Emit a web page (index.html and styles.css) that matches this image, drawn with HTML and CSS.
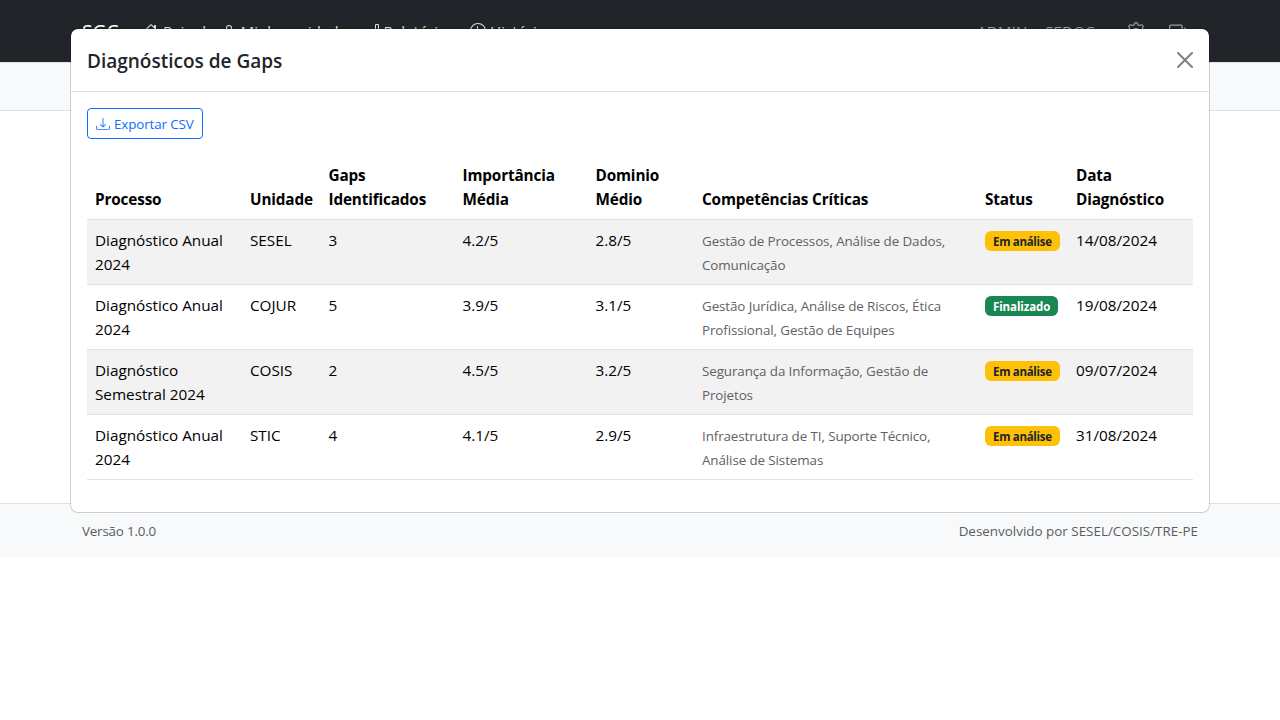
FILE: index.html
```html
<!DOCTYPE html>
<html lang="pt-BR">
<head>
<meta charset="utf-8">
<title>SGC</title>
<link rel="stylesheet" href="styles.css">
</head>
<body>
<nav class="navbar">
  <div class="container">
    <span class="brand">SGC</span>
    <div class="links">
      <span class="link painel"><svg class="bi" viewBox="0 0 16 16"><path d="M8.707 1.5a1 1 0 0 0-1.414 0L.646 8.146a.5.5 0 0 0 .708.708L2 8.207V13.5A1.5 1.5 0 0 0 3.500 15h9a1.500 1.500 0 0 0 1.500-1.500V8.207l.646.647a.5.5 0 0 0 .708-.708L13 5.793V2.500a.5.5 0 0 0-.5-.5h-1a.5.5 0 0 0-.5.5v1.293zM13 7.207V13.500a.5.5 0 0 1-.5.5h-9a.5.5 0 0 1-.5-.5V7.207l5-5z"/></svg> Painel</span>
      <span class="link unidade"><svg class="bi" viewBox="0 0 16 16"><path d="M8 8a3 3 0 1 0 0-6 3 3 0 0 0 0 6m2-3a2 2 0 1 1-4 0 2 2 0 0 1 4 0m4 8c0 1-1 1-1 1H3s-1 0-1-1 1-4 6-4 6 3 6 4m-1-.004c-.001-.246-.154-.986-.832-1.664C11.516 10.680 10.289 10 8 10s-3.516.68-4.168 1.332c-.678.678-.83 1.418-.832 1.664z"/></svg> Minha unidade</span>
      <span class="link relatorios"><svg class="bi" viewBox="0 0 16 16"><path d="M4 11H2v3h2zm5-4H7v7h2zm5-5v12h-2V2zm-2-1a1 1 0 0 0-1 1v12a1 1 0 0 0 1 1h2a1 1 0 0 0 1-1V2a1 1 0 0 0-1-1zM6 7a1 1 0 0 1 1-1h2a1 1 0 0 1 1 1v7a1 1 0 0 1-1 1H7a1 1 0 0 1-1-1zm-5 4a1 1 0 0 1 1-1h2a1 1 0 0 1 1 1v3a1 1 0 0 1-1 1H2a1 1 0 0 1-1-1z"/></svg> Relatórios</span>
      <span class="link historico"><svg class="bi" viewBox="0 0 16 16"><path d="M8 3.500a.5.5 0 0 0-1 0V9a.5.5 0 0 0 .252.434l3.500 2a.5.5 0 0 0 .496-.868L8 8.710z"/><path d="M8 16A8 8 0 1 0 8 0a8 8 0 0 0 0 16m7-8A7 7 0 1 1 1 8a7 7 0 0 1 14 0"/></svg> Histórico</span>
    </div>
    <div class="account">
      <span class="user">ADMIN - SEDOC</span>
      <svg class="bi-lg" viewBox="0 0 16 16"><path d="M8 4.754a3.246 3.246 0 1 0 0 6.492 3.246 3.246 0 0 0 0-6.492M5.754 8a2.246 2.246 0 1 1 4.492 0 2.246 2.246 0 0 1-4.492 0"/><path d="M9.796 1.343c-.527-1.790-3.065-1.790-3.592 0l-.094.319a.873.873 0 0 1-1.255.52l-.292-.16c-1.640-.892-3.433.902-2.540 2.541l.159.292a.873.873 0 0 1-.52 1.255l-.319.094c-1.790.527-1.790 3.065 0 3.592l.319.094a.873.873 0 0 1 .52 1.255l-.16.292c-.892 1.640.901 3.434 2.541 2.540l.292-.159a.873.873 0 0 1 1.255.52l.094.319c.527 1.790 3.065 1.790 3.592 0l.094-.319a.873.873 0 0 1 1.255-.52l.292.16c1.640.893 3.434-.902 2.540-2.541l-.159-.292a.873.873 0 0 1 .52-1.255l.319-.094c1.790-.527 1.790-3.065 0-3.592l-.319-.094a.873.873 0 0 1-.52-1.255l.16-.292c.893-1.640-.902-3.433-2.541-2.540l-.292.159a.873.873 0 0 1-1.255-.52zm-2.633.283c.246-.835 1.428-.835 1.674 0l.094.319a1.873 1.873 0 0 0 2.693 1.115l.291-.16c.764-.415 1.600.42 1.184 1.185l-.159.292a1.873 1.873 0 0 0 1.116 2.692l.318.094c.835.246.835 1.428 0 1.674l-.319.094a1.873 1.873 0 0 0-1.115 2.693l.16.291c.415.764-.42 1.600-1.185 1.184l-.291-.159a1.873 1.873 0 0 0-2.693 1.116l-.094.318c-.246.835-1.428.835-1.674 0l-.094-.319a1.873 1.873 0 0 0-2.692-1.115l-.292.16c-.764.415-1.600-.42-1.184-1.185l.159-.291A1.873 1.873 0 0 0 1.945 8.930l-.319-.094c-.835-.246-.835-1.428 0-1.674l.319-.094A1.873 1.873 0 0 0 3.060 4.377l-.16-.292c-.415-.764.42-1.600 1.185-1.184l.292.159a1.873 1.873 0 0 0 2.692-1.115z"/></svg>
      <svg class="bi-lg" viewBox="0 0 16 16"><path d="M10 12.500a.5.5 0 0 1-.5.5h-8a.5.5 0 0 1-.5-.5v-9a.5.5 0 0 1 .5-.5h8a.5.5 0 0 1 .5.5v2a.5.5 0 0 0 1 0v-2A1.500 1.500 0 0 0 9.500 2h-8A1.500 1.500 0 0 0 0 3.500v9A1.500 1.500 0 0 0 1.500 14h8a1.500 1.500 0 0 0 1.500-1.500v-2a.5.5 0 0 0-1 0z"/><path d="M15.854 8.354a.5.5 0 0 0 0-.708l-3-3a.5.5 0 0 0-.708.708L14.293 7.500H5.500a.5.5 0 0 0 0 1h8.793l-2.147 2.146a.5.5 0 0 0 .708.708z"/></svg>
    </div>
  </div>
</nav>
<div class="subbar"></div>
<main class="content"></main>
<footer class="footer">
  <div class="container"><span class="version">Versão 1.0.0</span><span class="credit">Desenvolvido por SESEL/COSIS/TRE-PE</span></div>
</footer>

<section class="modal">
  <header class="modal-header">
    <h5 class="modal-title">Diagnósticos de Gaps</h5>
    <svg class="close" viewBox="0 0 16 16"><path d="M.293.293a1 1 0 0 1 1.414 0L8 6.586 14.293.293a1 1 0 1 1 1.414 1.414L9.414 8l6.293 6.293a1 1 0 0 1-1.414 1.414L8 9.414l-6.293 6.293a1 1 0 0 1-1.414-1.414L6.586 8 .293 1.707a1 1 0 0 1 0-1.414z"/></svg>
  </header>
  <div class="modal-body">
    <button class="export"><svg class="dl" viewBox="0 0 16 16"><path d="M.5 9.900a.5.5 0 0 1 .5.5v2.500a1 1 0 0 0 1 1h12a1 1 0 0 0 1-1v-2.500a.5.5 0 0 1 1 0v2.500a2 2 0 0 1-2 2H2a2 2 0 0 1-2-2v-2.500a.5.5 0 0 1 .5-.5"/><path d="M7.646 11.854a.5.5 0 0 0 .708 0l3-3a.5.5 0 0 0-.708-.708L8.500 10.293V1.500a.5.5 0 0 0-1 0v8.793L5.354 8.146a.5.5 0 1 0-.708.708z"/></svg><span class="export-label">Exportar CSV</span></button>
    <table class="table">
      <colgroup><col class="c1"><col class="c2"><col class="c3"><col class="c4"><col class="c5"><col class="c6"><col class="c7"><col class="c8"></colgroup>
      <thead>
        <tr><th>Processo</th><th>Unidade</th><th>Gaps<br>Identificados</th><th>Importância<br>Média</th><th>Dominio<br>Médio</th><th>Competências Críticas</th><th>Status</th><th>Data<br>Diagnóstico</th></tr>
      </thead>
      <tbody>
        <tr><td>Diagnóstico Anual<br>2024</td><td>SESEL</td><td>3</td><td>4.2/5</td><td>2.8/5</td><td><small>Gestão de Processos, Análise de Dados,<br>Comunicação</small></td><td><span class="badge warning">Em análise</span></td><td>14/08/2024</td></tr>
        <tr><td>Diagnóstico Anual<br>2024</td><td>COJUR</td><td>5</td><td>3.9/5</td><td>3.1/5</td><td><small>Gestão Jurídica, Análise de Riscos, Ética<br>Profissional, Gestão de Equipes</small></td><td><span class="badge success">Finalizado</span></td><td>19/08/2024</td></tr>
        <tr><td>Diagnóstico<br>Semestral 2024</td><td>COSIS</td><td>2</td><td>4.5/5</td><td>3.2/5</td><td><small>Segurança da Informação, Gestão de<br>Projetos</small></td><td><span class="badge warning">Em análise</span></td><td>09/07/2024</td></tr>
        <tr><td>Diagnóstico Anual<br>2024</td><td>STIC</td><td>4</td><td>4.1/5</td><td>2.9/5</td><td><small>Infraestrutura de TI, Suporte Técnico,<br>Análise de Sistemas</small></td><td><span class="badge warning">Em análise</span></td><td>31/08/2024</td></tr>
      </tbody>
    </table>
  </div>
</section>
</body>
</html>
```
FILE: styles.css
```css
* { box-sizing: border-box; }
body { margin: 0; background: #fff; color: #212529; font: 15.3px/24px "Segoe UI", "Open Sans", sans-serif; letter-spacing: -0.02px; }
.container { width: 1140px; margin: 0 auto; padding: 0 12px; display: flex; align-items: center; justify-content: space-between; }
.navbar { height: 62px; background: #212529; display: flex; align-items: center; }
.brand { color: #fff; font-size: 19.2px; line-height: 30px; width: 61px; padding-top: 2px; }
.links { flex: 1; display: flex; color: #dedfdf; letter-spacing: -0.05px; }
.link { white-space: nowrap; }
.painel { width: 77.5px; }
.unidade { width: 143px; }
.relatorios { width: 106.5px; }
.bi { width: 16px; height: 16px; fill: currentColor; vertical-align: -2px; }
.bi-lg { width: 20px; height: 20px; margin-top: 1px; fill: currentColor; }
.account { display: flex; align-items: center; gap: 23.5px; padding-right: 9px; color: #9b9d9f; }
.user { width: 125px; letter-spacing: 0; word-spacing: 2.5px; }
.subbar { height: 49px; background: #f8f9fa; border-top: 1px solid #dee2e6; border-bottom: 1px solid #dee2e6; }
.content { height: 392px; }
.footer { height: 54px; padding-top: 17px; background: #f8f9fa; border-top: 1px solid #dee2e6; color: #595c5f; font-size: 13.4px; line-height: 21px; }
.version { letter-spacing: -0.2px; }
.credit { letter-spacing: 0.01px; }

.modal { position: absolute; top: 28px; left: 70px; width: 1140px; height: 485px; background: #fff; background-clip: padding-box; border: 1px solid rgba(0,0,0,.175); border-radius: 8px; }
.modal-header { height: 63px; padding: 0 16px; display: flex; align-items: center; justify-content: space-between; border-bottom: 1px solid #dee2e6; }
.modal-title { margin: 0 0 -2px; font-size: 19px; line-height: 30px; font-weight: 600; letter-spacing: 0; }
.close { width: 16px; height: 16px; fill: #808080; }
.modal-body { padding: 16px; }
.export { display: flex; align-items: center; gap: 4px; width: 116px; height: 31px; padding: 0 8px; border: 1px solid #0d6efd; border-radius: 4px; background: #fff; color: #0d6efd; font: 13.4px/21px "Segoe UI", "Open Sans", sans-serif; letter-spacing: -0.12px; white-space: nowrap; }
.export-label { padding-top: 1px; }
.dl { width: 14px; height: 14px; flex: none; fill: currentColor; }
.table { width: 1106px; margin-top: 16px; table-layout: fixed; border-collapse: collapse; color: #000; }
.c1 { width: 155px; }
.c2 { width: 78.5px; }
.c3 { width: 134px; }
.c4 { width: 133px; }
.c5 { width: 106.5px; }
.c6 { width: 283px; }
.c7 { width: 91px; }
.c8 { width: 125px; }
th, td { padding: 8px; text-align: left; white-space: nowrap; border-bottom: 1px solid #dee2e6; }
th { vertical-align: bottom; font-weight: 700; letter-spacing: -0.15px; }
td { vertical-align: top; }
tbody tr:nth-child(odd) { background: #f2f2f2; }
small { display: block; padding-top: 1px; margin-bottom: -1px; font-size: 13.4px; line-height: 24px; letter-spacing: -0.1px; color: #5f6164; }
.badge { display: block; width: fit-content; margin-top: 3px; height: 20px; padding: 4px 8px; border-radius: 6px; font-size: 11.5px; line-height: 13px; font-weight: 700; }
.warning { background: #ffc107; color: #212529; letter-spacing: -0.3px; }
.success { background: #198754; color: #fff; letter-spacing: -0.1px; }
```
